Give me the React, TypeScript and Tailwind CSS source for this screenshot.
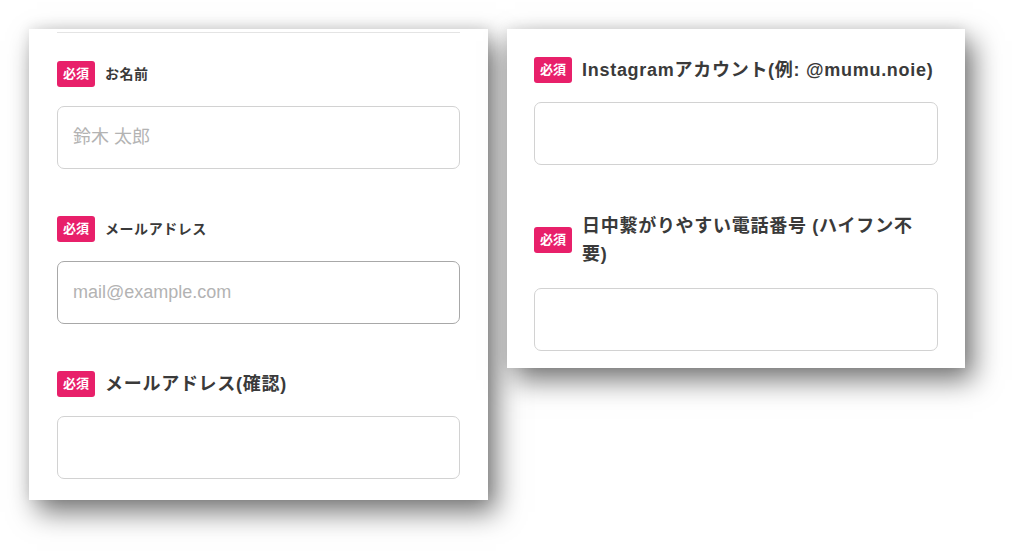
const jp = "font-['Liberation_Sans','Noto_Sans_CJK_JP',sans-serif]";

type Field = {
  label: string;
  big?: boolean;
  placeholder?: string;
  focused?: boolean;
  labelWidth?: string;
  inputGap?: string;
};

const left: Field[] = [
  { label: 'お名前', placeholder: '鈴木 太郎' },
  { label: 'メールアドレス', placeholder: 'mail@example.com', focused: true },
  { label: 'メールアドレス(確認)', big: true },
];

const right: Field[] = [
  { label: 'Instagramアカウント(例: @mumu.noie)', big: true },
  { label: '日中繋がりやすい電話番号 (ハイフン不要)', big: true, labelWidth: 'w-[340px]', inputGap: 'mt-[20px]' },
];

const Badge = () => (
  <span className="flex h-[26px] w-[38px] shrink-0 items-center justify-center rounded-[3px] bg-[#e8206a] text-[13px] font-semibold text-white">
    必須
  </span>
);

const FormField = ({ field }: { field: Field }) => (
  <div className="flex flex-col">
    <div className="flex min-h-[28px] items-center gap-[10px]">
      <Badge />
      <span
        className={
          field.big
            ? `text-[18px] leading-[28px] font-bold tracking-[0.04em] text-[#3a3a3a] ${field.labelWidth ?? ''}`
            : 'text-[14px] leading-[28px] font-bold tracking-[0.04em] text-[#3a3a3a]'
        }
      >
        {field.label}
      </span>
    </div>
    <div
      className={`${field.inputGap ?? 'mt-[18px]'} flex h-[63px] items-center rounded-[7px] border bg-white px-[15px] text-[18px] text-[#b3b3b3] ${
        field.focused ? 'border-[#a8a8a8]' : 'border-[#d2d2d2]'
      }`}
    >
      {field.placeholder}
    </div>
  </div>
);

const Card = ({
  fields,
  children,
  className,
  gap,
}: {
  fields: Field[];
  children?: React.ReactNode;
  className: string;
  gap: string;
}) => (
  <div className={`bg-white shadow-[8px_12px_26px_rgba(0,0,0,0.55),0_-2px_12px_rgba(0,0,0,0.08)] ${className}`}>
    {children}
    <div className={`flex flex-col ${gap}`}>
      {fields.map((f) => (
        <FormField key={f.label} field={f} />
      ))}
    </div>
  </div>
);

export default function App() {
  return (
    <div className={`h-[558px] w-[1024px] overflow-hidden bg-white ${jp}`}>
      <div className="flex items-start gap-[19px] pl-[29px] pt-[29px]">
        <Card fields={left} gap="gap-[46px]" className="w-[459px] px-[28px] pt-[3px] pb-[21px]">
          <div className="mb-[27px] h-px bg-[#e4e4e4]" />
        </Card>
        <Card fields={right} gap="gap-[47px]" className="w-[458px] px-[27px] pt-[27px] pb-[17px]" />
      </div>
    </div>
  );
}
